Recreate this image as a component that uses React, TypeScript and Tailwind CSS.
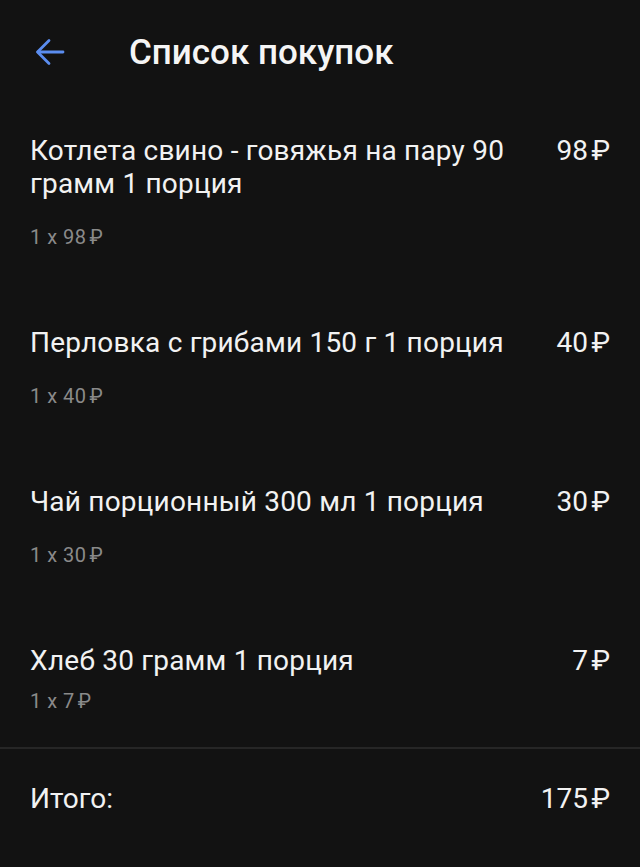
import React from 'react';

interface Item {
  name: string;
  price: number;
  qty: number;
  subGap: string;
}

const items: Item[] = [
  { name: 'Котлета свино - говяжья на пару 90 грамм 1 порция', price: 98, qty: 1, subGap: 'mt-[25px]' },
  { name: 'Перловка с грибами 150 г 1 порция', price: 40, qty: 1, subGap: 'mt-[25px]' },
  { name: 'Чай порционный 300 мл 1 порция', price: 30, qty: 1, subGap: 'mt-[25px]' },
  { name: 'Хлеб 30 грамм 1 порция', price: 7, qty: 1, subGap: 'mt-[12px]' },
];

const BackArrow = () => (
  <svg width="30" height="28" viewBox="0 0 30 28" fill="none" stroke="#5b8def" strokeWidth="2.8" strokeLinecap="round" strokeLinejoin="round">
    <path d="M28 14H3" />
    <path d="M14 2.5L2.5 14L14 25.5" />
  </svg>
);

const rub = (n: number) => `${n}\u202F₽`;

const App: React.FC = () => {
  return (
    <div className="min-h-[867px] w-full bg-[#121212] text-white" style={{ fontFamily: 'Roboto, "Noto Sans", sans-serif' }}>
      {/* Header */}
      <div className="flex h-[104px] items-center">
        <div className="ml-[35px] flex w-[94px] items-center">
          <BackArrow />
        </div>
        <h1 className="text-[35px] font-medium leading-none text-[#f5f5f5]">Список покупок</h1>
      </div>

      {/* Items */}
      <div className="px-[30px] pt-[30px]">
        {items.map((item, i) => (
          <div key={i} className={i < items.length - 1 ? 'mb-[77px]' : 'mb-[34px]'}>
            <div className="flex items-start justify-between gap-6">
              <div className="max-w-[490px] text-[28px] leading-[33px] tracking-[0.2px] text-[#f2f2f2]">{item.name}</div>
              <div className="whitespace-nowrap text-[28px] leading-[33px] text-[#f2f2f2]">{rub(item.price)}</div>
            </div>
            <div className={`${item.subGap} text-[20px] leading-[24px] tracking-[0.5px] text-[#8a8a8a]`}>
              {item.qty} x {rub(item.price)}
            </div>
          </div>
        ))}
      </div>

      <div className="h-[2px] bg-[#262626]" />

      {/* Total */}
      <div className="flex items-center justify-between px-[30px] pt-[33px]">
        <span className="text-[28px] leading-[33px] text-[#f2f2f2]">Итого:</span>
        <span className="text-[28px] leading-[33px] text-[#f2f2f2]">{rub(175)}</span>
      </div>
    </div>
  );
};

export default App;
